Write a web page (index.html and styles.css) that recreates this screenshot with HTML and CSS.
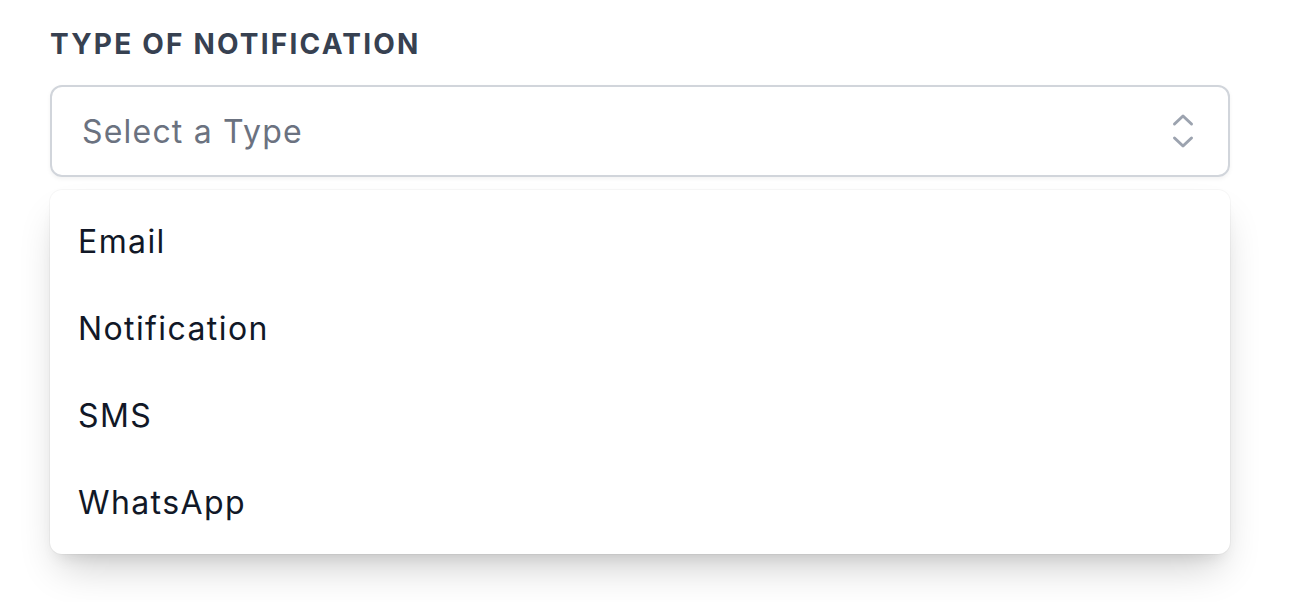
FILE: index.html
```html
<!DOCTYPE html>
<html lang="en">
<head>
<meta charset="utf-8">
<title>Type of notification</title>
<link rel="stylesheet" href="styles.css">
</head>
<body>
<div class="field">
  <label class="label" for="type">Type of notification</label>
  <div class="select" id="type">
    <span class="placeholder">Select a Type</span>
    <svg class="chevrons" width="24" height="36" viewBox="0 0 24 36" aria-hidden="true">
      <path d="M3.5 11 L12 3 L20.5 11" fill="none" stroke="#9ca3af" stroke-width="3" stroke-linecap="round" stroke-linejoin="round"/>
      <path d="M3.5 25 L12 33 L20.5 25" fill="none" stroke="#9ca3af" stroke-width="3" stroke-linecap="round" stroke-linejoin="round"/>
    </svg>
  </div>
  <ul class="menu">
    <li class="option">Email</li>
    <li class="option">Notification</li>
    <li class="option">SMS</li>
    <li class="option">WhatsApp</li>
  </ul>
</div>
</body>
</html>
```
FILE: styles.css
```css
html, body {
  margin: 0;
  padding: 0;
  background: #ffffff;
}
body {
  font-family: Inter, "Noto Sans", "Liberation Sans", sans-serif;
}
.field {
  width: 1180px;
  padding: 27px 0 48px 50px;
  display: flex;
  flex-direction: column;
}
.label {
  display: block;
  font-size: 28px;
  line-height: 34px;
  font-weight: 700;
  letter-spacing: 2.2px;
  text-transform: uppercase;
  color: #374151;
  margin-bottom: 24px;
}
.select {
  box-sizing: border-box;
  height: 92px;
  border: 2px solid #d1d5db;
  border-radius: 12px;
  display: flex;
  align-items: center;
  justify-content: space-between;
  padding: 0 33px 0 30px;
  box-shadow: 0 2px 4px rgba(0,0,0,0.05);
}
.placeholder {
  font-size: 32px;
  letter-spacing: 1.2px;
  color: #6b7280;
}
.chevrons {
  display: block;
}
.menu {
  list-style: none;
  margin: 13px 0 0 0;
  padding: 8px 0;
  background: #ffffff;
  border-radius: 12px;
  box-shadow: 0 22px 40px -10px rgba(0,0,0,0.2), 0 10px 16px -8px rgba(0,0,0,0.1), 0 0 0 1px rgba(0,0,0,0.03);
}
.option {
  height: 87px;
  display: flex;
  align-items: center;
  padding-left: 28px;
  font-size: 32px;
  letter-spacing: 1.4px;
  color: #111827;
}
```
